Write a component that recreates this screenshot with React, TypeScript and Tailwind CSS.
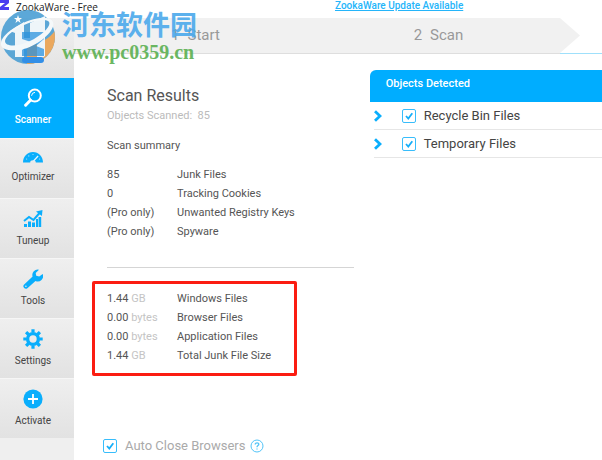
import React from 'react';
import type { ReactNode } from 'react';

type NavItem = { label: string; icon: ReactNode; active?: boolean };

const navItems: NavItem[] = [
    { label: 'Scanner', icon: <ScannerIcon />, active: true },
    { label: 'Optimizer', icon: <GaugeIcon /> },
    { label: 'Tuneup', icon: <ChartIcon /> },
    { label: 'Tools', icon: <WrenchIcon /> },
    { label: 'Settings', icon: <GearIcon /> },
    { label: 'Activate', icon: <PlusIcon /> },
];

const summary = [
    { count: '85', name: 'Junk Files' },
    { count: '0', name: 'Tracking Cookies' },
    { count: '(Pro only)', name: 'Unwanted Registry Keys' },
    { count: '(Pro only)', name: 'Spyware' },
];

const sizes = [
    { value: '1.44', unit: 'GB', name: 'Windows Files' },
    { value: '0.00', unit: 'bytes', name: 'Browser Files' },
    { value: '0.00', unit: 'bytes', name: 'Application Files' },
    { value: '1.44', unit: 'GB', name: 'Total Junk File Size' },
];

function ScannerIcon() {
    return (
        <svg width="20" height="20" viewBox="0 0 20 20" fill="none" stroke="#fff" strokeLinecap="round">
            <circle cx="11.800" cy="7.600" r="6" strokeWidth="2" />
            <path d="M7.400 12.200 2.600 17.200" strokeWidth="3" />
            <path d="M8.600 7.400a3.200 3.200 0 0 1 3-3" strokeWidth="1" />
        </svg>
    );
}

function GaugeIcon() {
    return (
        <svg width="20" height="16" viewBox="0 2 20 16">
            <path d="M0 15.500C0 9.500 4.500 5 10 5s10 4.500 10 10.500h-7.200a2.800 2.200 0 0 0-5.600 0z" fill="#0aaefc" />
            <path d="m10.500 14 4.600-5" stroke="#e8f6fd" strokeWidth="1.200" />
            <g fill="#b8e6fb">
                <circle cx="3.600" cy="12" r=".6" />
                <circle cx="5.800" cy="8.900" r=".6" />
                <circle cx="10" cy="7.500" r=".6" />
                <circle cx="16.600" cy="12" r=".6" />
            </g>
        </svg>
    );
}

function ChartIcon() {
    return (
        <svg width="20" height="20" viewBox="0 0 20 20" fill="#0aaefc">
            <path d="M1 15h3v3H1zM5 12.500h3V18H5zM9 13.500h3V18H9zM13 10h2v8h-2zM15.600 8h2.600v10h-2.600z" />
            <path d="m1 12 5-4 4.500 3 6-7" fill="none" stroke="#0aaefc" strokeWidth="2" />
            <path d="M13 2.500 19.500 1l-.6 6z" />
        </svg>
    );
}

function WrenchIcon() {
    return (
        <svg width="20" height="20" viewBox="0 0 20 20">
            <path
                d="M16 .7A5.400 5.400 0 0 0 9.600 7.600L.9 15.700a2.500 2.500 0 0 0 3.500 3.500l8.100-7.200A5.400 5.400 0 0 0 19.700 5l-3.500 2.600-3-.9-.5-2.800z"
                fill="#0aaefc"
            />
            <circle cx="2.900" cy="17.200" r=".8" fill="#eaeaea" />
        </svg>
    );
}

function GearIcon() {
    return (
        <svg width="20" height="20" viewBox="0 0 20 20" stroke="#0aaefc" fill="none">
            <circle cx="10" cy="10" r="5.400" strokeWidth="3.400" />
            <path
                d="M10 .3v3.200M10 16.500v3.200M.3 10h3.200M16.500 10h3.200M3.100 3.100l2.400 2.400M14.500 14.500l2.400 2.400M3.100 16.900l2.400-2.400M14.500 5.500l2.400-2.400"
                strokeWidth="3.200"
            />
        </svg>
    );
}

function PlusIcon() {
    return (
        <svg width="20" height="20" viewBox="0 0 20 20">
            <circle cx="10" cy="10" r="9.600" fill="#0aaefc" />
            <path d="M10 5v10M5 10h10" stroke="#fff" strokeWidth="1.800" />
        </svg>
    );
}

function WatermarkLogo() {
    return (
        <svg width="58" height="58" viewBox="0 0 58 58" className="shrink-0">
            <defs>
                <clipPath id="disc"><circle cx="28" cy="29" r="27" /></clipPath>
            </defs>
            <g clipPath="url(#disc)">
                <path d="M0 0h58v58H0z" fill="#4b9fd4" />
                <path d="M58 18C52 29 42 36 27 38v20h31z" fill="#eba14f" />
                {/* pillars */}
                <path d="m10 23 14-9v35H15V25zM30 15l15-7v40l-8 6V35h-7l-6 3v-8h6z" fill="#eef6fb" />
                <path d="M22 24h22v7l-8 7 8 3v7H22v-6l9-8-9-3z" fill="#1788dc" opacity=".75" />
            </g>
            <rect x="22" y="49" width="22" height="6" rx="3" fill="#1f86e8" />
            {/* orbit */}
            <path
                fillRule="evenodd"
                d="M1 35C2 23 36 5 50 11C63 18 36 41 18 42C8 43 0 41 1 35zM5 33C5 39 18 39 30 33C44 26 53 16 48 13C39 8 7 22 5 33z"
                fill="#f6fafc"
            />
            <path d="m18 7 1 3h3l-2.400 2 1 3-2.600-2-2.600 2 1-3-2.400-2h3z" fill="#fff" />
        </svg>
    );
}

function CheckBox({ id }: { id: string }) {
    return (
        <span className="relative h-3.5 w-3.5 shrink-0">
            <input
                id={id}
                type="checkbox"
                defaultChecked
                className="peer block h-3.5 w-3.5 appearance-none rounded-xs border border-[#38bdfb] bg-white"
            />
            <svg
                viewBox="0 0 14 14"
                className="pointer-events-none absolute inset-0 hidden peer-checked:block"
                fill="none"
                stroke="#16aef8"
                strokeWidth="1.800"
            >
                <path d="m4 7 2.300 2.500L10.300 4.300" />
            </svg>
        </span>
    );
}

function DetectedRow({ id, label }: { id: string; label: string }) {
    return (
        <li className="ml-1 flex h-7 items-center border-b border-[#e6e6e6]">
            <button type="button" aria-label={`Expand ${label}`} className="mr-5 w-2">
                <svg width="8" height="12" viewBox="0 0 8 12" fill="none" stroke="#0aaefc" strokeWidth="2.800">
                    <path d="m1 1.200 5 4.800-5 4.800" />
                </svg>
            </button>
            <CheckBox id={id} />
            <label htmlFor={id} className="ml-2 text-[13px] text-[#444]">{label}</label>
        </li>
    );
}

function Sidebar() {
    return (
        <nav className="w-[74px] shrink-0 bg-[#efefef]">
            {/* the app mark sits under the site badge */}
            <div className="h-[60px] bg-linear-to-b from-[#f1f1f1] to-[#e2e2e2]" />
            {navItems.map((item) => (
                <button
                    key={item.label}
                    type="button"
                    className={
                        item.active
                            ? 'flex h-[60px] w-full flex-col items-center gap-1 bg-[#00adff] pt-2.5 pr-2 text-[10px] leading-4 font-medium text-white'
                            : 'flex h-[60px] w-full flex-col items-center gap-1 border-t border-[#f6f6f6] bg-linear-to-b from-[#efefef] to-[#e2e2e2] pt-2.5 pr-2 text-[10px] leading-4 text-[#444]'
                    }
                >
                    {item.icon}
                    {item.label}
                </button>
            ))}
        </nav>
    );
}

function Steps() {
    return (
        <div className="flex h-9">
            <ol className="flex flex-1 border-b border-[#dedede] bg-[#f1f1f1] text-[15px] text-[#999]">
                <li className="flex flex-1 items-center justify-center gap-2"><span>1</span>Start</li>
                <li className="flex flex-1 items-center justify-center gap-2"><span>2</span>Scan</li>
            </ol>
            <div className="w-[42px] border-b border-[#9fe0fb]">
                <svg width="20" height="35" viewBox="0 0 20 35">
                    <path d="M0 0 20 17.500 0 35z" fill="#f1f1f1" />
                </svg>
            </div>
        </div>
    );
}

function ScanResults() {
    return (
        <section className="pt-8 pr-4 pl-[33px] text-[#555]">
            <h1 className="text-base leading-5">Scan Results</h1>
            <p className="text-[11px] leading-5 text-[#bbb]">Objects Scanned:&nbsp; 85</p>
            <h2 className="mt-2.5 text-[11px] leading-5">Scan summary</h2>
            <table className="mt-2.5 text-[11px]">
                <tbody>
                    {summary.map((row) => (
                        <tr key={row.name} className="h-[19px]">
                            <td className="w-[70px] p-0">{row.count}</td>
                            <td className="p-0">{row.name}</td>
                        </tr>
                    ))}
                </tbody>
            </table>
            <hr className="mt-[25px] border-[#d5d5d5]" />
            <div className="mt-[13px] mr-[57px] -ml-[15px] rounded-xs border-3 border-[#fb1d12] pt-1.5 pb-[7px] pl-3">
                <table className="text-[11px]">
                    <tbody>
                        {sizes.map((row) => (
                            <tr key={row.name} className="h-[19px]">
                                <td className="w-[70px] p-0">{row.value} <span className="text-[#c4c4c4]">{row.unit}</span></td>
                                <td className="p-0">{row.name}</td>
                            </tr>
                        ))}
                    </tbody>
                </table>
            </div>
            <div className="mt-[60px] -ml-1 flex items-center text-[#aaa]">
                <CheckBox id="auto-close" />
                <label htmlFor="auto-close" className="ml-2 text-[13px] leading-5">Auto Close Browsers</label>
                <button type="button" aria-label="Help" className="ml-1">
                    <svg width="14" height="14" viewBox="0 0 14 14" fill="none" stroke="#52c4f8">
                        <circle cx="7" cy="7" r="6" />
                        <path d="M5.200 5.500C5.200 3.200 9 3.300 8.800 5.400 8.700 6.600 7 6.700 7 8.300M7 9.400v1.200" strokeWidth="1.300" />
                    </svg>
                </button>
            </div>
        </section>
    );
}

export default function App() {
    return (
        <div className="relative flex min-h-screen flex-col overflow-hidden bg-white font-[Roboto,sans-serif]">
            <header className="flex h-[18px] items-start text-[10px] leading-3">
                <svg width="10" height="10" viewBox="0 0 10 10" className="shrink-0">
                    <path d="M0 0h9v3L4 7h5v3H0V7l5-4H0z" fill="#4a3df0" />
                </svg>
                <span className="ml-1.5 w-[319px] font-['Open_Sans',sans-serif] leading-[14px] text-[#222]">ZookaWare - Free</span>
                <a href="#update" className="font-medium text-[#25b5fa] underline">ZookaWare Update Available</a>
            </header>
            <div className="flex flex-1">
                <Sidebar />
                <main className="min-w-0 flex-1">
                    <Steps />
                    <div className="grid grid-cols-[14fr_11fr]">
                        <ScanResults />
                        <section className="pt-4">
                            <h2 className="h-8 rounded-tl-md bg-[#00adff] pl-4 text-[11px] leading-7 font-medium text-white">Objects Detected</h2>
                            <ul>
                                <DetectedRow id="recycle" label="Recycle Bin Files" />
                                <DetectedRow id="temporary" label="Temporary Files" />
                            </ul>
                        </section>
                    </div>
                </main>
            </div>
            <div className="pointer-events-none absolute top-2 left-0 flex gap-1 opacity-90">
                <WatermarkLogo />
                <div className="font-bold">
                    <p className="font-['Noto_Sans_CJK_SC',sans-serif] text-[27px] leading-8 text-[#4ba9ec]">河东软件园</p>
                    <p className="font-['Liberation_Serif',serif] text-xl leading-6 text-[#5cb052]">www.pc0359.cn</p>
                </div>
            </div>
        </div>
    );
}
